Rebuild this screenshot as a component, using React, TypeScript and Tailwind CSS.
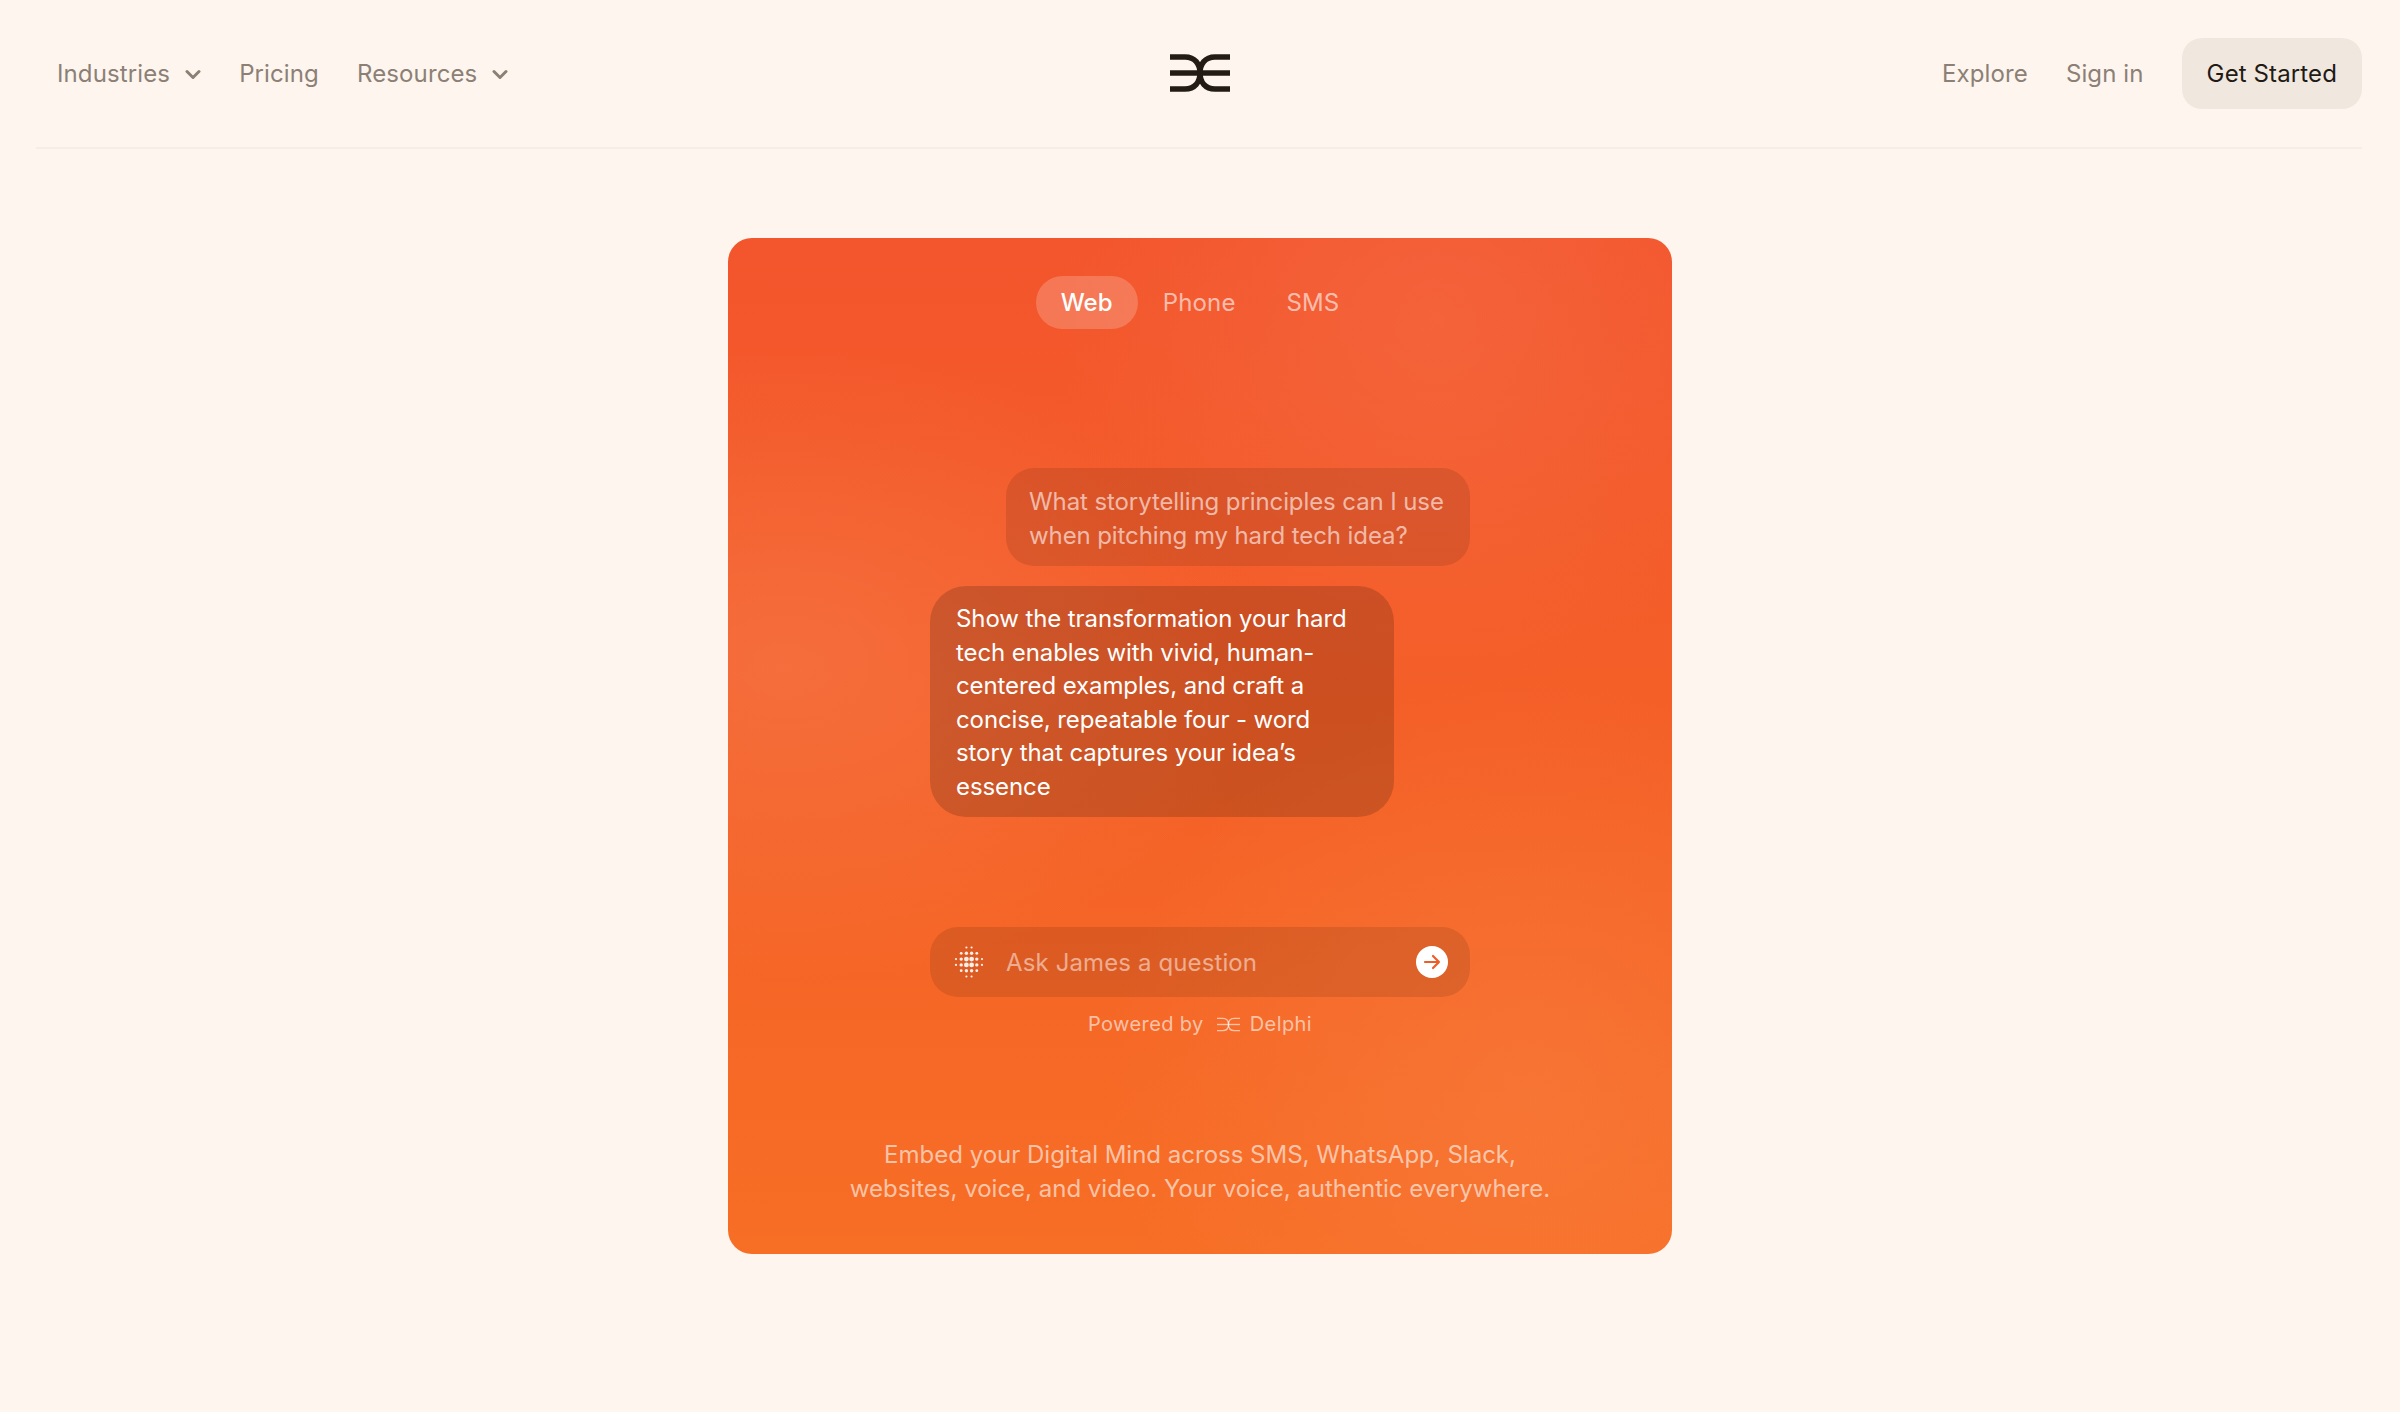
import React from "react";

function Logo({ className, sw = 5.5 }: { className: string; sw?: number }) {
  return (
    <svg className={className} viewBox="0 0 60 38" fill="none" stroke="currentColor" strokeWidth={sw}>
      <path d="M0 3H15C25 3 30 10 30 19C30 28 25 35 15 35H0" />
      <path d="M60 3H45C35 3 30 10 30 19C30 28 35 35 45 35H60" />
      <path d="M0 19H60" />
    </svg>
  );
}

function Chevron() {
  return (
    <svg className="w-[16px] h-[11px]" viewBox="0 0 16 11" fill="none" stroke="currentColor" strokeWidth="3" strokeLinecap="round" strokeLinejoin="round">
      <path d="M2 2.5L8 8.5L14 2.5" />
    </svg>
  );
}

function Dots() {
  const xs = [-13, -7.8, -2.6, 2.6, 7.8, 13];
  const ys = [-14.5, -8.7, -2.9, 2.9, 8.7, 14.5];
  const dots: { x: number; y: number; r: number }[] = [];
  for (const x of xs)
    for (const y of ys) {
      const d = Math.hypot(x, y);
      if (d > 15.5) continue;
      dots.push({ x, y, r: d < 5 ? 2.4 : d < 10 ? 1.7 : d < 13 ? 1.4 : 1.1 });
    }
  return (
    <svg className="w-[32px] h-[32px] shrink-0" viewBox="-16 -16 32 32" fill="#fff" fillOpacity="0.9">
      {dots.map((d, i) => (
        <circle key={i} cx={d.x} cy={d.y} r={d.r} />
      ))}
    </svg>
  );
}

export default function App() {
  return (
    <div className="min-h-[1412px] bg-[#fef6ee] font-['Inter',sans-serif] text-[24px] leading-[33.6px]">
      <header className="ml-[36px] mr-[38px] h-[149px] border-b-2 border-[#f5eee6] pl-[21px] flex items-center justify-between relative tracking-[0.005em]">
        <nav className="flex items-center gap-[38px] text-[#8c8076]">
          <a className="flex items-center gap-[15px] pt-[1px]">Industries <Chevron /></a>
          <a className="pt-[1px]">Pricing</a>
          <a className="flex items-center gap-[15px] pt-[1px]">Resources <Chevron /></a>
        </nav>
        <Logo className="absolute left-[1134px] top-[54px] w-[60px] h-[38px] text-[#231c15]" />
        <div className="flex items-center gap-[38px] text-[#8c8076]">
          <a className="pt-[1px]">Explore</a>
          <a className="pt-[1px]">Sign in</a>
          <button className="h-[71px] px-[25px] pt-[1px] rounded-[20px] bg-[#f0e8df] text-[#1f1a15]">Get Started</button>
        </div>
      </header>

      <main className="flex justify-center pt-[89px]">
        <section className="w-[944px] h-[1016px] rounded-[24px] overflow-hidden flex flex-col items-center text-white bg-[radial-gradient(circle_at_75%_8%,rgba(245,115,80,0.42),transparent_32%),radial-gradient(ellipse_at_6%_42%,rgba(246,125,80,0.5),transparent_38%),radial-gradient(circle_at_85%_85%,rgba(248,130,70,0.45),transparent_36%),linear-gradient(180deg,#f3552c_0%,#f46027_50%,#f76e25_100%)]">
          <div className="mt-[38px] ml-[1px] flex items-center h-[53px]">
            <div className="h-[53px] px-[25px] pt-[1px] rounded-full bg-white/20 flex items-center font-medium tracking-[0.005em]">Web</div>
            <div className="px-[25px] pt-[1px] text-white/60 tracking-[0.005em]">Phone</div>
            <div className="px-[26px] pt-[1px] text-white/60 tracking-[0.005em]">SMS</div>
          </div>

          <div className="w-[540px] mt-[139px] flex flex-col tracking-[-0.004em] leading-[33.5px]">
            <div className="self-end w-[464px] h-[98px] rounded-[28px] bg-black/10 pl-[23px] py-[17px] text-white/60">
              What storytelling principles can I use when pitching my hard tech idea?
            </div>
            <div className="mt-[20px] w-[464px] h-[231px] rounded-[36px] bg-black/[0.16] pl-[26px] pr-[30px] py-[16px] text-white">
              Show the transformation your hard tech enables with vivid, human-centered examples, and craft a concise, repeatable four - word story that captures your idea’s essence
            </div>
            <div className="mt-[110px] h-[70px] rounded-[28px] bg-black/10 flex items-center pl-[23px] pr-[22px]">
              <Dots />
              <span className="ml-[21px] flex-1 pt-[2px] text-white/50 tracking-[0.005em]">Ask James a question</span>
              <div className="w-[32px] h-[32px] rounded-full bg-white flex items-center justify-center text-[#ee5d27]">
                <svg className="w-[20px] h-[20px]" viewBox="0 0 20 20" fill="none" stroke="currentColor" strokeWidth="2.2" strokeLinecap="round" strokeLinejoin="round">
                  <path d="M3 10H17M11 4L17 10L11 16" />
                </svg>
              </div>
            </div>
            <div className="mt-[13px] flex items-center justify-center text-[20px] leading-[28px] text-white/60 tracking-[0.02em]">
              <span>Powered by</span>
              <Logo className="ml-[13px] mr-[10px] w-[23px] h-[15px]" sw={3.5} />
              <span>Delphi</span>
            </div>
          </div>

          <p className="mt-[100px] w-[720px] text-center text-white/60 leading-[33.5px]">
            Embed your Digital Mind across SMS, WhatsApp, Slack, websites, voice, and video. Your voice, authentic everywhere.
          </p>
        </section>
      </main>
    </div>
  );
}
